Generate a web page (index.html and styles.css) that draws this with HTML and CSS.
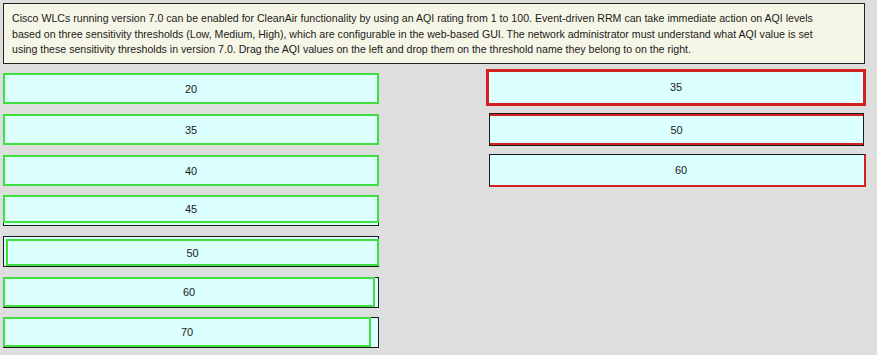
FILE: index.html
```html
<!DOCTYPE html>
<html lang="en">
<head>
  <meta charset="UTF-8" />
  <title>CleanAir AQI Thresholds - Drag and Drop</title>
  <link rel="stylesheet" href="styles.css">
</head>
<body>

  <div class="question">
    Cisco WLCs running version 7.0 can be enabled for CleanAir functionality by using an AQI rating from 1 to 100. Event-driven RRM can take immediate action on AQI levels<br>
    based on three sensitivity thresholds (Low, Medium, High), which are configurable in the web-based GUI. The network administrator must understand what AQI value is set<br>
    using these sensitivity thresholds in version 7.0. Drag the AQI values on the left and drop them on the threshold name they belong to on the right.
  </div>

  <div class="board">
    <div class="sources">
      <div class="slot"><div class="chip">20</div></div>
      <div class="slot"><div class="chip">35</div></div>
      <div class="slot"><div class="chip">40</div></div>
      <div class="slot slot-tight"><div class="chip chip-up">45</div></div>
      <div class="slot"><div class="chip chip-in">50</div></div>
      <div class="slot"><div class="chip chip-short">60</div></div>
      <div class="slot slot-tight"><div class="chip chip-shorter">70</div></div>
    </div>

    <div class="targets">
      <div class="target target-a">35</div>
      <div class="target target-b">50</div>
      <div class="target target-c">60</div>
    </div>
  </div>

</body>
</html>
```

FILE: styles.css
```css
body {
  font-family: "Liberation Sans", Arial, sans-serif;
  font-size: 11px;
  color: #1a1a1a;
  background: #dedede;
  margin: 0;
  padding: 3px 0 0 3px;
}

.question {
  width: 862px;
  height: 61px;
  box-sizing: border-box;
  background: #f6f6e6;
  border: 1px solid #222;
  padding: 7px 7px 0 8px;
  font-size: 10.6px;
  line-height: 15.5px;
  white-space: nowrap;
}

.board {
  display: flex;
  align-items: flex-start;
}

.sources {
  width: 376px;
  margin-top: 9px;
  display: flex;
  flex-direction: column;
  gap: 10px;
}

.slot {
  height: 31px;
  box-sizing: border-box;
  border: 1px solid #1a1a1a;
  background: #dcffff;
}

.slot-tight {
  margin-top: -1px;
}

.chip {
  height: 31px;
  margin: -1px 0 0 -1px;
  width: calc(100% + 2px);
  box-sizing: border-box;
  border: 2px solid #3fdf3f;
  background: #dcffff;
  display: flex;
  align-items: center;
  justify-content: center;
}

.chip-up {
  height: 28px;
}

.chip-in {
  height: 27px;
  margin: 2px 0 0 2px;
  width: calc(100% - 1px);
}

.chip-short {
  width: calc(100% - 2px);
  height: 30px;
}

.chip-shorter {
  width: calc(100% - 6px);
  height: 30px;
}

.targets {
  width: 380px;
  margin: 5px 0 0 107px;
  display: flex;
  flex-direction: column;
}

.target {
  background: #dcffff;
  box-sizing: border-box;
  display: flex;
  align-items: center;
  justify-content: center;
}

.target-a {
  height: 37px;
  border: 3px solid #d42222;
  box-shadow: inset 2px -1px 0 #dcffff;
  padding-bottom: 1px;
}

.target-b {
  height: 33px;
  margin: 7px 2px 0 3px;
  border: 1px solid #1a1a1a;
  box-shadow: inset 0 2px 0 #d42222, inset 0 -2px 0 #d42222;
  padding-top: 1px;
}

.target-c {
  height: 33px;
  margin: 8px 0 0 3px;
  border-left: 1px solid #1a1a1a;
  border-top: 1px solid #1a1a1a;
  border-right: 2px solid #d42222;
  border-bottom: 2px solid #d42222;
  padding-left: 8px;
}
```
